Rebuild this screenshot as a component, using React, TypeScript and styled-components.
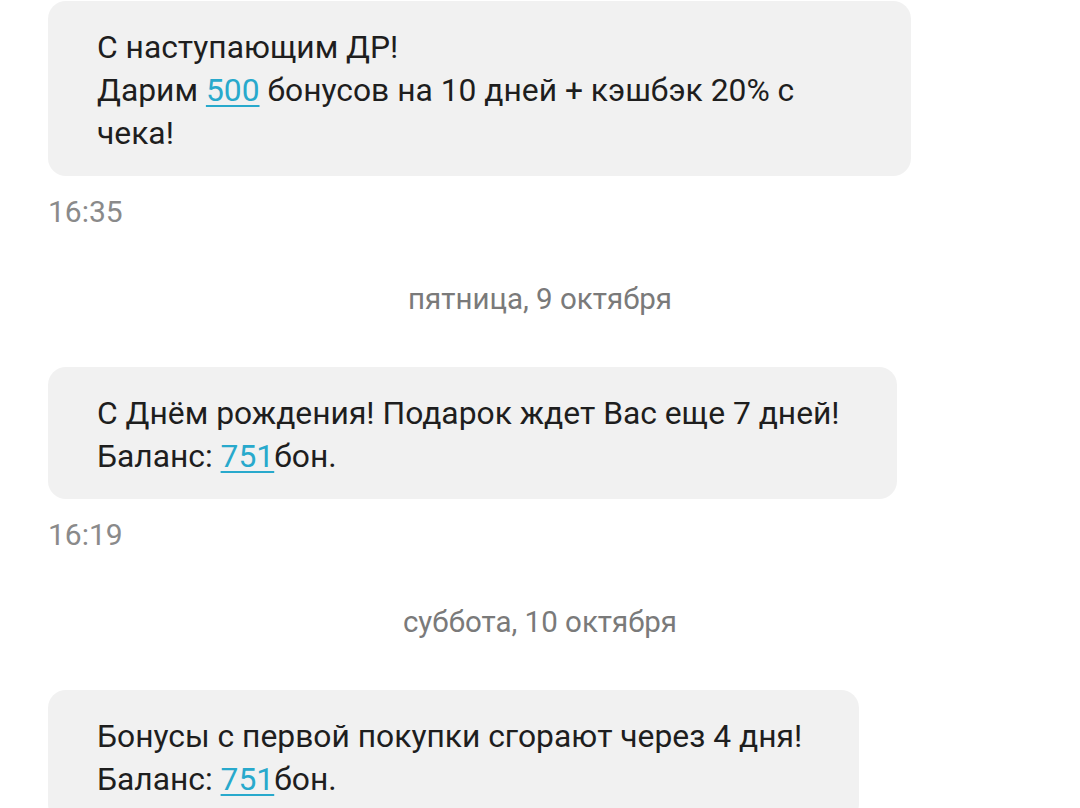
import * as React from 'react';
import styled, { createGlobalStyle } from 'styled-components';

const GlobalStyle = createGlobalStyle`
	html, body {
		margin: 0;
		padding: 0;
		background: #ffffff;
	}
	body {
		font-family: Roboto, 'Noto Sans', sans-serif;
		overflow: hidden;
	}
`;

type Part = string | { link: string };

interface Message {
	lines: Part[][];
	time?: string;
	dateAfter?: string;
}

const messages: Message[] = [
	{
		lines: [['С наступающим ДР!'], ['Дарим ', { link: '500' }, ' бонусов на 10 дней + кэшбэк 20% с чека!']],
		time: '16:35',
		dateAfter: 'пятница, 9 октября',
	},
	{
		lines: [['С Днём рождения! Подарок ждет Вас еще 7 дней!'], ['Баланс: ', { link: '751' }, 'бон.']],
		time: '16:19',
		dateAfter: 'суббота, 10 октября',
	},
	{
		lines: [['Бонусы с первой покупки сгорают через 4 дня!'], ['Баланс: ', { link: '751' }, 'бон.']],
	},
];

const App = () => {
	return (
		<>
			<GlobalStyle />
			<Thread>
				{messages.map((msg, i) => (
					<Group key={i}>
						<Bubble>
							{msg.lines.map((line, j) => (
								<Line key={j}>
									{line.map((part, k) =>
										typeof part === 'string' ? (
											<React.Fragment key={k}>{part}</React.Fragment>
										) : (
											<Link key={k}>{part.link}</Link>
										),
									)}
								</Line>
							))}
						</Bubble>
						{msg.time && <Time>{msg.time}</Time>}
						{msg.dateAfter && <DateLabel>{msg.dateAfter}</DateLabel>}
					</Group>
				))}
			</Thread>
		</>
	);
};

const Thread = styled.div`
	height: 808px;
	overflow: hidden;
	padding: 1px 0 0 48px;
	width: 1032px;
	box-sizing: border-box;
`;

const Group = styled.div`
	display: flex;
	flex-direction: column;
	align-items: flex-start;
`;

const Bubble = styled.div`
	box-sizing: border-box;
	max-width: 863px;
	padding: 25px 57px 21px 49px;
	background: #f1f1f1;
	border-radius: 18px;
	color: #1e1e1e;
	font-size: 31.8px;
	line-height: 43px;
`;

const Line = styled.div``;

const Link = styled.span`
	color: #28a9cc;
	text-decoration: underline;
	text-decoration-thickness: 1.5px;
	text-underline-offset: 4px;
`;

const Time = styled.div`
	margin-top: 18px;
	color: #8a8a8a;
	font-size: 30px;
	line-height: 36px;
`;

const DateLabel = styled.div`
	align-self: stretch;
	margin: 51px 0 50px;
	text-align: center;
	color: #7a7a7a;
	font-size: 29.5px;
	line-height: 36px;
`;

export default App;
